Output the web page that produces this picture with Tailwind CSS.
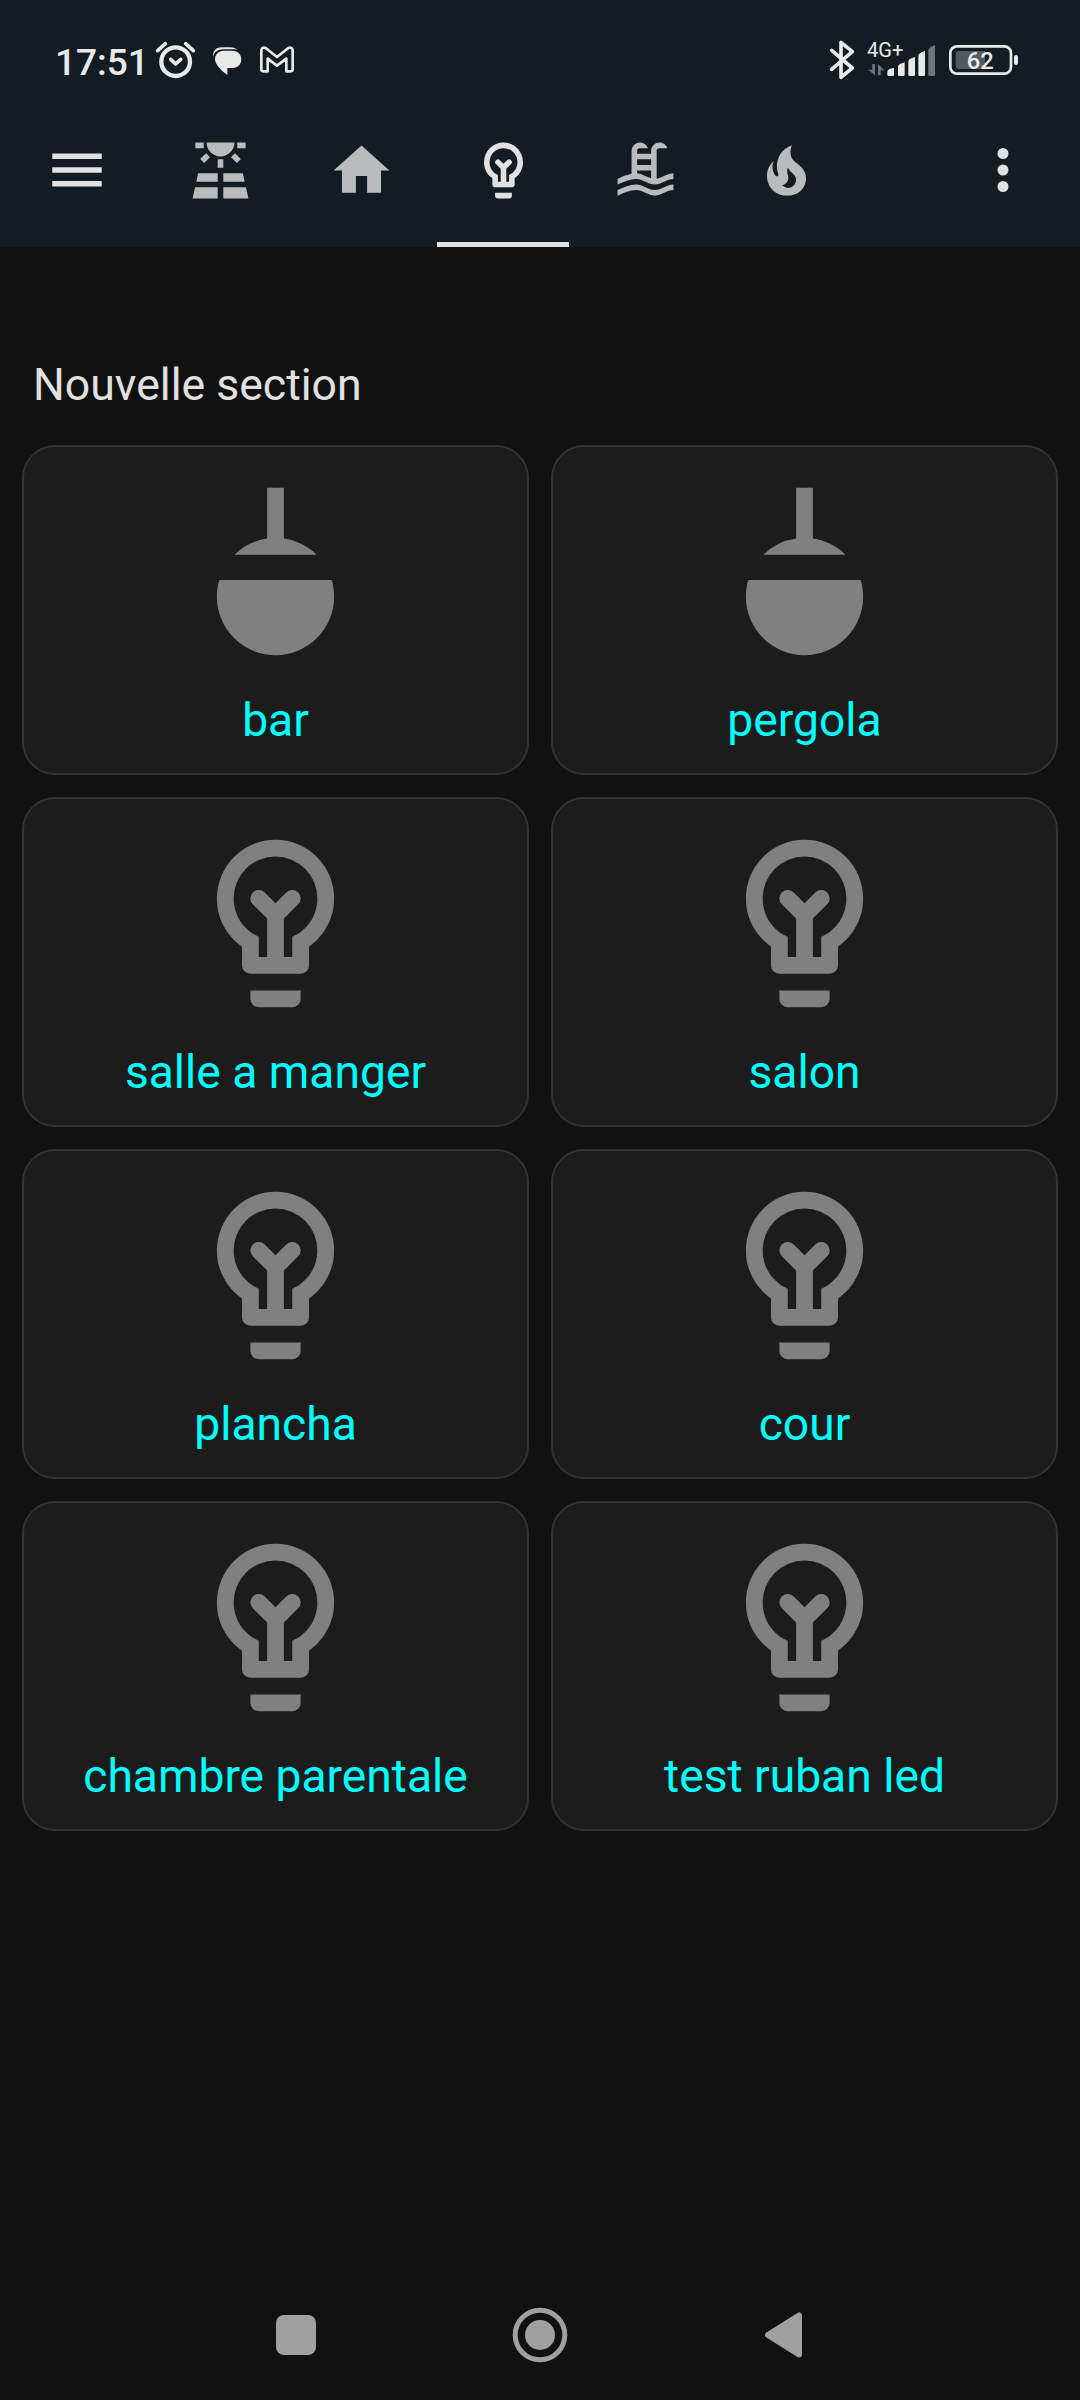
<!DOCTYPE html>
<html lang="fr">
  <head>
    <meta charset="UTF-8" />
    <meta name="viewport" content="width=device-width, initial-scale=1.0" />
    <title>Lumières</title>
    <script src="https://cdn.jsdelivr.net/npm/@tailwindcss/browser@4"></script>
  </head>
  <body class="bg-[#111111] font-['Roboto',sans-serif] text-[#e1e1e1]">
    <!-- Icônes partagées -->
    <svg class="hidden">
      <symbol id="bulb" viewBox="0 0 24 24">
        <path d="M12 2a7 7 0 0 1 7 7c0 2.38-1.19 4.47-3 5.74V17a1 1 0 0 1-1 1H9a1 1 0 0 1-1-1v-2.26C6.19 13.47 5 11.38 5 9a7 7 0 0 1 7-7M9 21v-1h6v1a1 1 0 0 1-1 1h-4a1 1 0 0 1-1-1m3-17a5 5 0 0 0-5 5c0 2.05 1.23 3.81 3 4.58V16h1v-4.59l-1.71-1.7a1 1 0 0 1 1.42-1.42L12 9.59l1.29-1.3a1 1 0 0 1 1.42 1.42L13 11.41V16h1v-2.42c1.77-.77 3-2.53 3-4.58a5 5 0 0 0-5-5z" />
      </symbol>
      <symbol id="ceiling" viewBox="0 0 24 24">
        <path d="M11 2h2v6.07c1.5.21 2.85.91 3.9 1.93H7.1A7 7 0 0 1 11 8.07V2M5.29 13h13.42c.19.64.29 1.3.29 2a7 7 0 0 1-14 0c0-.7.1-1.36.29-2z" />
      </symbol>
    </svg>

    <div class="flex h-[2400px] w-[1080px] flex-col">
      <header class="h-[247px] bg-[#141c23]">
        <!-- Barre d'état -->
        <div class="flex h-[93px] items-start justify-between pt-10 pr-[61px] pl-[55px]">
          <div class="flex items-start">
            <span class="w-[100px] text-[37px] leading-[45px] font-medium text-[#e8eaea]">17:51</span>
            <svg class="h-10 w-[41px]" viewBox="345 60 123 120" fill="none" stroke="#e8eaea" stroke-linecap="round" stroke-linejoin="round">
              <circle cx="407" cy="125" r="43" stroke-width="13" />
              <path d="M353 92l23-21M460 92l-23-21" stroke-width="11" />
              <path d="M392 118l15 14 15-14" stroke-width="11" />
            </svg>
            <svg class="ml-4 h-10 w-[30px]" viewBox="516 60 90 120" fill="#e8eaea">
              <path d="M520 110c-3-16 8-28 24-28h26c10 0 18 3 22 7-4-1-8-1-12-1h-31c-16 0-27 9-29 22z" />
              <path d="M551 92h27c15 0 26 11 26 26s-11 26-26 26h-16v20c-4 0-37-27-37-46 0-15 11-26 26-26z" />
            </svg>
            <svg class="ml-[17px] h-10 w-9" viewBox="657 60 108 120" fill="none" stroke="#e8eaea" stroke-width="8" stroke-linejoin="round">
              <path d="M664 91v57q0 6 6 6h13v-38l28 21 28-21v38h13q6 0 6-6V91q-2-11-13-7l-34 27-34-27q-11-4-13 7z" />
            </svg>
          </div>
          <div class="flex items-start">
            <svg class="h-10 w-[26px]" viewBox="57 60 78 120" fill="none" stroke="#e8eaea" stroke-width="11" stroke-linecap="round" stroke-linejoin="round">
              <path d="M65 91l62 53-34 28V67l34 28-62 53" />
            </svg>
            <svg class="ml-3 h-10 w-[69px] overflow-visible" viewBox="171 60 207 120" fill="#e8eaea">
              <text x="171" y="110" font-size="59" textLength="109" lengthAdjust="spacingAndGlyphs">4G+</text>
              <path d="M187 132h8v34l-21-17h13zM204 166h8v-15h11l-19-19z" fill="#6f7579" />
              <path d="M232 156q0-10 20-12v20q0 4-4 4h-12q-4 0-4-4zM264 140q0-8 20-13v37q0 4-4 4h-12q-4 0-4-4zM295 124q0-8 20-13v53q0 4-4 4h-12q-4 0-4-4zM325 107q0-8 20-14v71q0 4-4 4h-12q-4 0-4-4z" />
              <path d="M355 91q0-9 20-15v88q0 4-4 4h-12q-4 0-4-4z" fill="#6f7579" />
            </svg>
            <svg class="ml-3 h-10 w-[71px]" viewBox="414 60 213 120" fill="#e8eaea">
              <rect x="421" y="79" width="182" height="82" rx="20" fill="none" stroke="#e8eaea" stroke-width="8" />
              <path d="M447 93h78v54h-78q-10 0-10-10v-34q0-10 10-10z" fill="#53595f" />
              <rect x="612" y="105" width="12" height="30" rx="6" />
              <text x="470" y="147" font-size="71" font-weight="500" textLength="81" lengthAdjust="spacingAndGlyphs">62</text>
            </svg>
          </div>
        </div>

        <!-- Barre d'outils et onglets -->
        <div class="flex h-[154px] items-center fill-[#e1e1e1]">
          <svg class="ml-11 size-[66px]" viewBox="0 0 24 24"><path d="M3 6h18v2H3V6m0 5h18v2H3v-2m0 5h18v2H3v-2z" /></svg>
          <nav class="ml-11 flex h-full gap-[9.5px] fill-[#b9bbbd]">
            <div class="flex w-[132px] items-center justify-center">
              <svg class="size-[67px]" viewBox="0 0 24 24"><path d="M3.33 16H11v-3H4l-.67 3M13 16h7.67L20 13h-7v3m8.11 2H13v4h9l-.89-4M2 22h9v-4H2.89L2 22m9-14h2v3h-2V8m4.76-.79l1.42-1.42 2.12 2.12-1.41 1.42-2.13-2.12m-11.05.7l2.12-2.12 1.41 1.42-2.12 2.12-1.41-1.42M3 2h3v2H3V2m15 0h3v2h-3V2m-6 5c2.76 0 5-2.24 5-5H7c0 2.76 2.24 5 5 5z" /></svg>
            </div>
            <div class="flex w-[132px] items-center justify-center">
              <svg class="size-[67px]" viewBox="0 0 24 24"><path d="M10 20v-6h4v6h5v-8h3L12 3 2 12h3v8h5z" /></svg>
            </div>
            <div class="flex w-[132px] items-center justify-center border-b-5 border-[#e1e1e1] fill-[#e1e1e1] pt-[5px]">
              <svg class="size-[67px]"><use href="#bulb" /></svg>
            </div>
            <div class="flex w-[132px] items-center justify-center pl-px">
              <svg class="size-[67px]" viewBox="0 0 24 24"><path d="M2 15c1.67-.75 3.33-1.5 5-1.83V5a3 3 0 0 1 3-3c1.31 0 2.42.83 2.83 2H10a1 1 0 0 0-1 1v1h5V5a3 3 0 0 1 3-3c1.31 0 2.42.83 2.83 2H17a1 1 0 0 0-1 1v9.94c2-.32 4-1.94 6-1.94v2c-2.22 0-4.44 2-6.67 2-2.22 0-4.44-2-6.66-2-2.23 0-4.45 1-6.67 2v-2m12-7H9v2h5V8m0 4H9v1c1.67.16 3.33 1.31 5 1.79V12M2 19c2.22-1 4.44-2 6.67-2 2.22 0 4.44 2 6.66 2 2.23 0 4.45-2 6.67-2v2c-2.22 0-4.44 2-6.67 2-2.22 0-4.44-2-6.66-2-2.23 0-4.45 1-6.67 2v-2z" /></svg>
            </div>
            <div class="flex w-[132px] items-center justify-center">
              <svg class="size-[67px]" viewBox="0 0 24 24"><path d="M17.66 11.2c-.23-.3-.51-.56-.77-.82-.67-.6-1.43-1.03-2.07-1.66C13.33 7.26 13 4.85 13.95 3c-.95.23-1.78.75-2.49 1.32-2.59 2.08-3.61 5.75-2.39 8.9.04.1.08.2.08.33 0 .22-.15.42-.35.5-.23.1-.47.04-.66-.12a.58.58 0 0 1-.14-.17c-1.13-1.43-1.31-3.48-.55-5.12C5.78 10 4.87 12.3 5 14.47c.06.5.12 1 .29 1.5.14.6.41 1.2.71 1.73 1.08 1.73 2.95 2.97 4.96 3.22 2.14.27 4.43-.12 6.07-1.6 1.83-1.66 2.47-4.32 1.53-6.6l-.13-.26c-.21-.46-.77-1.26-.77-1.26m-3.16 6.3c-.28.24-.74.5-1.1.6-1.12.4-2.24-.16-2.9-.82 1.19-.28 1.9-1.16 2.11-2.05.17-.8-.15-1.46-.28-2.23-.12-.74-.1-1.37.17-2.06.19.38.39.76.63 1.06.77 1 1.98 1.44 2.24 2.8.04.14.06.28.06.43.03.82-.33 1.72-.93 2.27z" /></svg>
            </div>
          </nav>
          <svg class="mr-11 ml-auto size-[66px]" viewBox="0 0 24 24"><path d="M12 16a2 2 0 1 1 0 4 2 2 0 0 1 0-4m0-6a2 2 0 1 1 0 4 2 2 0 0 1 0-4m0-6a2 2 0 1 1 0 4 2 2 0 0 1 0-4z" /></svg>
        </div>
      </header>

      <!-- Section -->
      <main class="flex-1 px-[22px] pt-[105px]">
        <h2 class="mb-[27px] pl-[11px] text-[44.6px] leading-[66px]">Nouvelle section</h2>
        <div class="grid grid-cols-2 gap-[22px] text-center text-[46.2px] leading-[54px] text-[#00ffff]">
          <div class="flex h-[330px] flex-col items-center rounded-[33px] border-2 border-[#333333] bg-[#1c1c1c] pt-6">
            <svg class="mb-[21px] size-[201px] fill-[#808080]"><use href="#ceiling" /></svg>
            <span>bar</span>
          </div>
          <div class="flex h-[330px] flex-col items-center rounded-[33px] border-2 border-[#333333] bg-[#1c1c1c] pt-6">
            <svg class="mb-[21px] size-[201px] fill-[#808080]"><use href="#ceiling" /></svg>
            <span>pergola</span>
          </div>
          <div class="flex h-[330px] flex-col items-center rounded-[33px] border-2 border-[#333333] bg-[#1c1c1c] pt-6">
            <svg class="mb-[21px] size-[201px] fill-[#808080]"><use href="#bulb" /></svg>
            <span>salle a manger</span>
          </div>
          <div class="flex h-[330px] flex-col items-center rounded-[33px] border-2 border-[#333333] bg-[#1c1c1c] pt-6">
            <svg class="mb-[21px] size-[201px] fill-[#808080]"><use href="#bulb" /></svg>
            <span>salon</span>
          </div>
          <div class="flex h-[330px] flex-col items-center rounded-[33px] border-2 border-[#333333] bg-[#1c1c1c] pt-6">
            <svg class="mb-[21px] size-[201px] fill-[#808080]"><use href="#bulb" /></svg>
            <span>plancha</span>
          </div>
          <div class="flex h-[330px] flex-col items-center rounded-[33px] border-2 border-[#333333] bg-[#1c1c1c] pt-6">
            <svg class="mb-[21px] size-[201px] fill-[#808080]"><use href="#bulb" /></svg>
            <span>cour</span>
          </div>
          <div class="flex h-[330px] flex-col items-center rounded-[33px] border-2 border-[#333333] bg-[#1c1c1c] pt-6">
            <svg class="mb-[21px] size-[201px] fill-[#808080]"><use href="#bulb" /></svg>
            <span>chambre parentale</span>
          </div>
          <div class="flex h-[330px] flex-col items-center rounded-[33px] border-2 border-[#333333] bg-[#1c1c1c] pt-6">
            <svg class="mb-[21px] size-[201px] fill-[#808080]"><use href="#bulb" /></svg>
            <span>test ruban led</span>
          </div>
        </div>
      </main>

      <!-- Navigation système -->
      <footer class="flex h-[130px] items-center pl-[276px]">
        <div class="size-10 rounded-[8px] bg-[#a0a0a0]"></div>
        <svg class="ml-[196px] size-14" viewBox="0 0 56 56" fill="#a0a0a0">
          <circle cx="28" cy="28" r="24.8" fill="none" stroke="#a0a0a0" stroke-width="5" />
          <circle cx="28" cy="28" r="15" />
        </svg>
        <svg class="ml-[196px] h-[46px] w-[38px]" viewBox="0 0 38 46" fill="#a0a0a0" stroke="#a0a0a0" stroke-width="6" stroke-linejoin="round">
          <path d="M4 23L35 3.500V42.500z" />
        </svg>
      </footer>
    </div>
  </body>
</html>
